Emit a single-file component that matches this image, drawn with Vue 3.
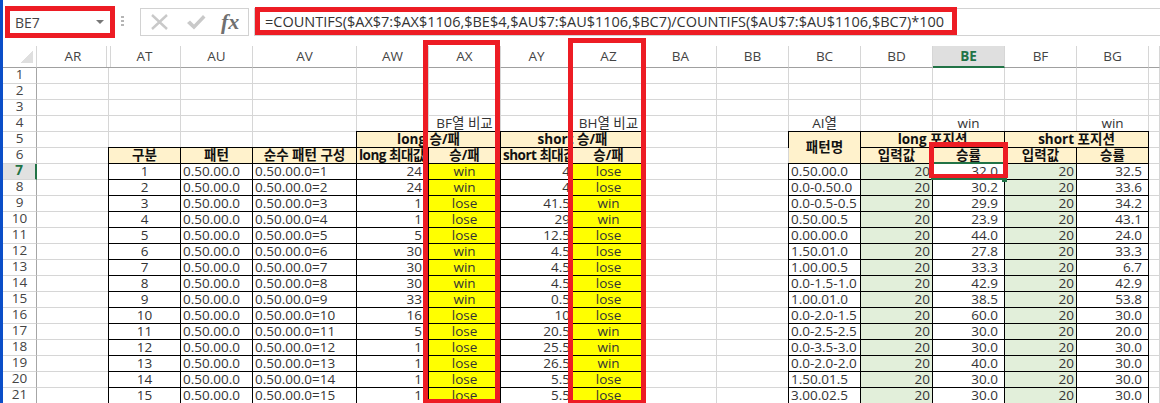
<script setup>
const cols = ['AR','AT','AU','AV','AW','AX','AY','AZ','BA','BB','BC','BD','BE','BF','BG','']
const formula = '=COUNTIFS($AX$7:$AX$1106,$BE$4,$AU$7:$AU$1106,$BC7)/COUNTIFS($AU$7:$AU$1106,$BC7)*100'
const maxLong = [24,24,1,1,5,30,30,30,33,16,5,1,1,1,1]
const resLong = 'win win lose lose lose win win win win lose lose lose lose lose lose'.split(' ')
const maxShort = ['4','4','41.5','29','12.5','4.5','4.5','4.5','0.5','10','20.5','25.5','26.5','5.5','5.5']
const resShort = 'lose lose win win lose lose lose lose lose lose win win win lose lose'.split(' ')
const names = ['0.50.00.0','0.0-0.50.0','0.0-0.5-0.5','0.50.00.5','0.00.00.0','1.50.01.0','1.00.00.5','0.0-1.5-1.0','1.00.01.0','0.0-2.0-1.5','0.0-2.5-2.5','0.0-3.5-3.0','0.0-2.0-2.0','1.50.01.5','3.00.02.5']
const rateLong = ['32.0','30.2','29.9','23.9','44.0','27.8','33.3','42.9','38.5','60.0','30.0','30.0','40.0','30.0','30.0']
const rateShort = ['32.5','33.6','34.2','43.1','24.0','33.3','6.7','42.9','53.8','30.0','20.0','30.0','30.0','30.0','30.0']

const cells = []
const add = (text, cls = 'grid') => cells.push({ id: cells.length, text, cls })
const blank = (n) => { for (let i = 0; i < n; i++) add('') }

// header row
add('', 'corner')
cols.forEach((c) => add(c, 'colhead' + (c === 'BE' ? ' colsel' : '') + (c === 'AR' ? ' colfrozen-l' : '') + (c === 'AT' ? ' colfrozen-r' : '')))

const rowHead = (n) => add(String(n), 'rowhead' + (n === 7 ? ' rowsel' : ''))

for (let r = 1; r <= 3; r++) { rowHead(r); blank(16) }

rowHead(4); blank(5)
add('BF열 비교', 'grid c'); add(''); add('BH열 비교', 'grid c'); blank(2)
add('AI열', 'grid c'); add(''); add('win', 'grid c'); add(''); add('win', 'grid c'); add('')

rowHead(5); blank(4)
add('long 승/패', 'b head c span2'); add('short 승/패', 'b head c span2'); blank(2)
add('패턴명', 'b head c tall'); add('long 포지션', 'b head c span2'); add('short 포지션', 'b head c span2'); add('')

rowHead(6); add('')
add('구분', 'b head c'); add('패턴', 'b head c'); add('순수 패턴 구성', 'b head c')
add('long 최대값', 'b head c wide'); add('승/패', 'b head c')
add('short 최대값', 'b head c wide'); add('승/패', 'b head c'); blank(2)
add('입력값', 'b head c'); add('승률', 'b head c'); add('입력값', 'b head c'); add('승률', 'b head c'); add('')

for (let i = 0; i < 15; i++) {
  rowHead(i + 7); add('')
  add(String(i + 1), 'b c')
  add('0.50.00.0', 'b l')
  add('0.50.00.0=' + (i + 1), 'b l')
  add(String(maxLong[i]), 'b r7')
  add(resLong[i], 'b c yellow')
  add(maxShort[i], 'b r2')
  add(resShort[i], 'b c yellow')
  blank(2)
  add(names[i], 'b l')
  add('20', 'b r2 green')
  add(rateLong[i], 'b r7')
  add('20', 'b r2 green')
  add(rateShort[i], 'b r7')
  add('')
}
</script>

<template>
  <div class="app">
    <div class="strip"></div>
    <div class="main">
      <div class="toolbar">
        <div class="namebox">
          <span>BE7</span>
          <i class="arrow"></i>
        </div>
        <div class="dots"><i></i><i></i><i></i></div>
        <div class="fxbox">
          <svg class="ico" width="19" height="18" viewBox="0 0 19 18">
            <path d="M2 2 L17 16 M17 2 L2 16" stroke="#c9c9c9" stroke-width="2.4" fill="none" />
          </svg>
          <svg class="ico" width="20" height="18" viewBox="0 0 20 18">
            <path d="M1 10 L4 7.5 L8 11.5 L17 2 L19.5 4.5 L8 16.5 Z" fill="#c9c9c9" />
          </svg>
          <span class="fx">fx</span>
        </div>
        <div class="formula">{{ formula }}</div>
      </div>
      <div class="sheet">
        <div v-for="c in cells" :key="c.id" :class="c.cls">{{ c.text }}</div>
      </div>
    </div>

    <div class="selection"></div>
    <div class="handle"></div>

    <div class="red red-name"></div>
    <div class="red red-formula"></div>
    <div class="red red-ax"></div>
    <div class="red red-az"></div>
    <div class="red red-be"></div>
  </div>
</template>

<style>
html, body { margin: 0; padding: 0; background: #fff; overflow: hidden; }
</style>

<style scoped>
.app {
  position: relative;
  display: flex;
  width: 1160px;
  height: 403px;
  overflow: hidden;
  background: #fff;
  color: #333;
  font-family: "Open Sans", "Noto Sans CJK KR", sans-serif;
  font-size: 13.5px;
}
.strip { width: 3px; flex: none; background: #0b4ec8; }
.main { flex: 1; min-width: 0; display: flex; flex-direction: column; }

.toolbar {
  height: 46px;
  flex: none;
  box-sizing: border-box;
  display: flex;
  align-items: flex-start;
  padding-top: 8px;
}
.namebox {
  margin: 3px 0 0 7px;
  width: 100px;
  height: 22px;
  box-sizing: border-box;
  padding: 0 6px 0 5px;
  display: flex;
  align-items: center;
  justify-content: space-between;
  font-size: 14px;
  color: #444;
}
.arrow {
  display: block;
  border-left: 4px solid transparent;
  border-right: 4px solid transparent;
  border-top: 4px solid #777;
}
.dots {
  margin: 8px 0 0 11px;
  width: 4px;
  display: flex;
  flex-direction: column;
  gap: 2px;
}
.dots i { display: block; width: 3px; height: 2px; background: #b5b5b5; }
.fxbox {
  margin-left: 15px;
  width: 109px;
  height: 28px;
  box-sizing: border-box;
  border: 1px solid #d2d2d2;
  display: flex;
  align-items: center;
  padding-left: 9px;
}
.ico { flex: none; }
.ico + .ico { margin-left: 17px; }
.fx {
  margin-left: 15px;
  font-family: "Liberation Serif", serif;
  font-style: italic;
  font-weight: 700;
  font-size: 22px;
  line-height: 24px;
  color: #707070;
}
.formula {
  margin-left: 5px;
  flex: 1;
  height: 28px;
  box-sizing: border-box;
  border: 1px solid #d2d2d2;
  border-right: 0;
  padding-left: 10px;
  line-height: 25px;
  font-size: 14.5px;
  color: #333;
  white-space: nowrap;
}

.sheet {
  display: grid;
  grid-template-columns: 34px 72px 72px 72px 104px repeat(11, 72px) 11px;
  grid-template-rows: 22px;
  grid-auto-rows: 16px;
  flex: none;
}
.sheet > div {
  box-sizing: border-box;
  white-space: nowrap;
  line-height: 15px;
}
.grid { border-right: 1px solid #d6d6d6; border-bottom: 1px solid #d6d6d6; }
.corner {
  border-right: 1px solid #d6d6d6;
  border-bottom: 1px solid #a0a0a0;
  background: linear-gradient(135deg, #fff 50%, #dfdfdf 50%) no-repeat 17px 4px / 13px 13px;
}
.colhead {
  border-right: 1px solid #d6d6d6;
  border-bottom: 1px solid #a0a0a0;
  text-align: center;
  color: #444;
}
.sheet > .colhead { line-height: 21px; }
.colfrozen-l { border-right: 0; box-shadow: inset -2px 0 0 #fff, inset -3px 0 0 #d6d6d6; }
.colfrozen-r { box-shadow: inset 1px 0 0 #fff, inset 2px 0 0 #d6d6d6; }
.colsel {
  background: #dfdfdf;
  border-bottom: 2px solid #217346;
  color: #217346;
  font-weight: 700;
}
.sheet > .rowhead {
  border-right: 1px solid #a6a6a6;
  border-bottom: 1px solid #d6d6d6;
  text-align: center;
  color: #444;
  line-height: 12px;
}
.sheet > .rowsel {
  background: #e1e1e1;
  border-right: 2px solid #217346;
  color: #217346;
  font-weight: 700;
}
.b {
  border: 1px solid #000;
  margin: -1px 0 0 -1px;
  background: #fff;
  color: #333;
}
.head { background: #fff2cc; font-weight: 700; color: #111; }
.c { text-align: center; }
.l { padding-left: 2px; }
.wide { padding-left: 2px; text-align: left; letter-spacing: -0.5px; overflow: visible; }
.r2 { text-align: right; padding-right: 2px; }
.r7 { text-align: right; padding-right: 6px; }
.yellow { background: #ffff00; color: #333; }
.green { background: #e2efda; }
.span2 { grid-column: span 2; }
.sheet > .tall { grid-row: span 2; line-height: 30px; }

.selection {
  position: absolute;
  left: 931px;
  top: 162px;
  width: 74px;
  height: 18px;
  box-sizing: border-box;
  border: 2px solid #217346;
}
.handle {
  position: absolute;
  left: 1002px;
  top: 178px;
  width: 5px;
  height: 4px;
  background: #217346;
}
.red { position: absolute; box-sizing: border-box; border: 5px solid #ed1c24; }
.red-name { left: 5px; top: 6px; width: 110px; height: 32px; }
.red-formula { left: 255px; top: 7px; width: 702px; height: 28px; }
.red-ax { left: 423px; top: 40px; width: 77px; height: 363px; border-bottom-width: 4px; }
.red-az { left: 568px; top: 38px; width: 78px; height: 365px; border-bottom-width: 3px; }
.red-be { left: 929px; top: 142px; width: 79px; height: 36px; border-bottom-width: 4px; }
</style>
